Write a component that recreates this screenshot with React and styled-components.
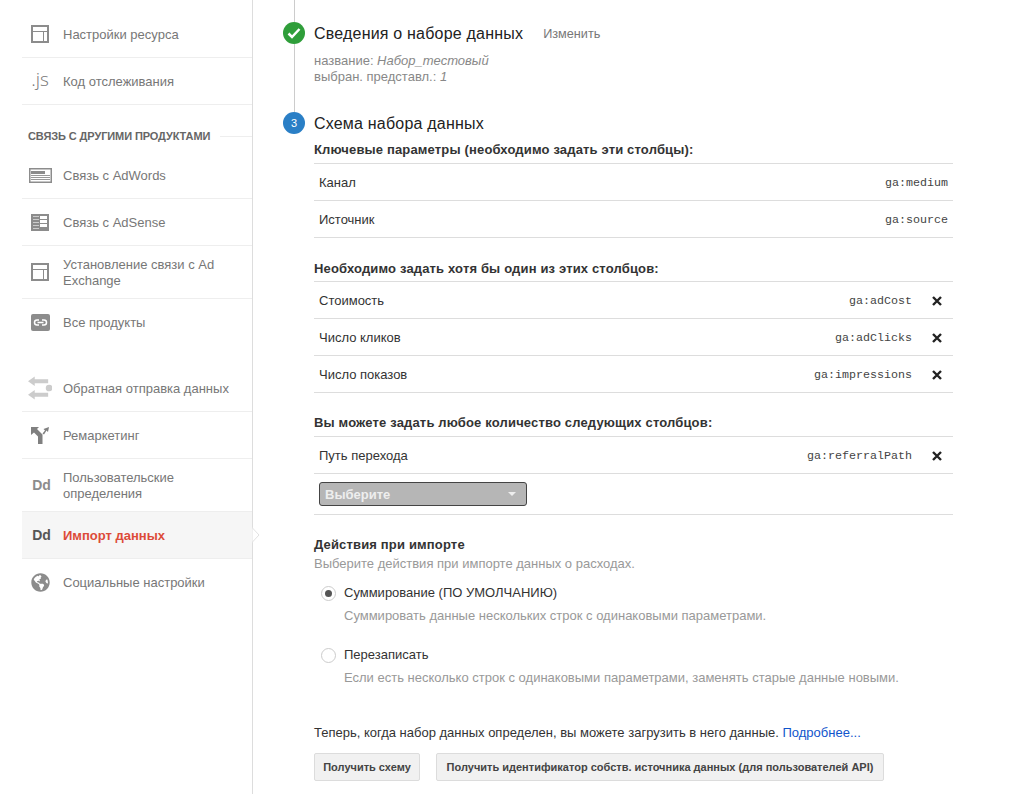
import React from 'react';
import styled, { createGlobalStyle } from 'styled-components';
import { FaGlobeAmericas } from 'react-icons/fa';

const GlobalStyle = createGlobalStyle`
    html, body {
        margin: 0;
        padding: 0;
        background: #fff;
    }
    body {
        font-family: "Liberation Sans", Arial, sans-serif;
        font-size: 13px;
        line-height: 16px;
        color: #333;
    }
`;

const Page = styled.div`
    display: flex;
    height: 794px;
    overflow: hidden;
`;

const Sidebar = styled.nav`
    box-sizing: border-box;
    width: 253px;
    flex: none;
    padding: 11px 0 0 22px;
    border-right: 1px solid #ddd;
`;

const Group = styled.div`
    margin-bottom: ${p => p.$gap || 0}px;
`;

const Item = styled.div`
    position: relative;
    box-sizing: border-box;
    display: flex;
    align-items: center;
    min-height: 47px;
    padding: 11px 20px 9px 6px;
    border-bottom: 1px solid ${p => (p.$last ? 'transparent' : '#eee')};
    background: ${p => (p.$active ? '#f6f6f6' : 'transparent')};
`;

const IconSlot = styled.div`
    width: 24px;
    flex: none;
    display: flex;
    align-items: center;
    justify-content: center;
    margin: -2px 11px 0 0;
    color: #8c8c8c;
`;

const ItemText = styled.span`
    color: ${p => (p.$active ? '#dd4b39' : '#777')};
    font-weight: ${p => (p.$active ? 'bold' : 'normal')};
`;

const JsGlyph = styled.span`
    font-family: "Open Sans", sans-serif;
    font-weight: 300;
    font-size: 19px;
    line-height: 20px;
    color: #777;
    position: relative;
    top: -2px;
`;

const DdGlyph = styled.span`
    padding-left: 3px;
    font-weight: bold;
    font-size: 14px;
    color: ${p => (p.$active ? '#555' : '#8c8c8c')};
`;

const ActiveNotch = styled.svg`
    position: absolute;
    left: 100%;
    top: 15px;
    width: 8px;
    height: 16px;
`;

const SectionHead = styled.div`
    display: flex;
    align-items: center;
    margin: 23px 0 8px 6px;
    font-size: 11px;
    letter-spacing: -0.1px;
    font-weight: bold;
    color: #666;
    white-space: nowrap;

    &::after {
        content: '';
        flex: 1;
        height: 1px;
        margin-left: 10px;
        background: #eee;
    }
`;

const Main = styled.main`
    flex: 1;
    min-width: 0;
    padding: 0 61px 0 30px;
`;

const Step = styled.section`
    display: flex;
`;

const Marker = styled.div`
    width: 22px;
    flex: none;
    margin-right: 9px;
    display: flex;
    flex-direction: column;
    align-items: center;
`;

const Rail = styled.div`
    width: 1px;
    flex: ${p => (p.$grow ? '1' : 'none')};
    height: ${p => (p.$grow ? 'auto' : '22px')};
    background: #ccc;
`;

const Bullet = styled.div`
    width: 22px;
    height: 22px;
    flex: none;
    border-radius: 50%;
    display: flex;
    align-items: center;
    justify-content: center;
    background: ${p => p.$color};
    color: #fff;
    font-size: 11px;
`;

const StepBody = styled.div`
    flex: 1;
    min-width: 0;
    padding-top: ${p => p.$top || 0}px;
    padding-bottom: ${p => p.$bottom || 0}px;
`;

const StepTitle = styled.h2`
    box-sizing: border-box;
    display: flex;
    align-items: center;
    height: 22px;
    margin: 0;
    padding-top: 2px;
    font-size: 16px;
    letter-spacing: 0.2px;
    font-weight: normal;
    line-height: 20px;
    color: #222;
`;

const EditLink = styled.span`
    margin-left: 20px;
    font-size: 12.7px;
    letter-spacing: 0;
    color: #777;
`;

const Summary = styled.div`
    margin-top: 9px;
    color: #888;
`;

const ColumnsHead = styled.h3`
    margin: ${p => p.$top}px 0 ${p => p.$bottom}px;
    font-size: 13px;
    letter-spacing: 0.16px;
    line-height: 16px;
    font-weight: bold;
    color: #333;
`;

const Table = styled.div`
    border-top: 1px solid #ddd;
`;

const Row = styled.div`
    box-sizing: border-box;
    display: flex;
    align-items: center;
    height: 37px;
    padding: 2px 0 0 5px;
    border-bottom: 1px solid #ddd;
    color: #333;
`;

const RowLabel = styled.span`
    flex: 1;
`;

const ColumnId = styled.code`
    font-family: "Liberation Mono", "Courier New", monospace;
    font-size: 11.67px;
    color: #444;
    margin-right: ${p => (p.$removable ? '0' : '5px')};
`;

const Remove = styled.svg`
    width: 10px;
    height: 10px;
    flex: none;
    margin: -1px 11px 0 20px;
`;

const SelectRow = styled.div`
    padding: 8px 0;
    border-bottom: 1px solid #ddd;
`;

const Select = styled.div`
    box-sizing: border-box;
    width: 208px;
    height: 24px;
    margin-left: 5px;
    padding: 2px 10px 0 5px;
    display: flex;
    align-items: center;
    justify-content: space-between;
    background: #b6b6b6;
    border: 1px solid #444;
    border-radius: 3px;
    color: #eee;
    font-weight: bold;

    &::after {
        content: '';
        margin-top: -2px;
        border-style: solid;
        border-width: 4px 4.5px 0;
        border-color: #eee transparent transparent;
    }
`;

const Hint = styled.div`
    margin: ${p => p.$top || 0}px 0 0 ${p => p.$left || 0}px;
    color: #999;
`;

const RadioRow = styled.label`
    display: flex;
    align-items: center;
    margin: ${p => p.$top}px 0 0 7px;
    color: #333;
`;

const RadioDot = styled.span`
    box-sizing: border-box;
    width: 15px;
    height: 15px;
    margin-right: 8px;
    border: 1px solid #ccc;
    border-radius: 50%;
    background: #fff;
    display: flex;
    align-items: center;
    justify-content: center;

    &::after {
        content: '';
        display: ${p => (p.$checked ? 'block' : 'none')};
        width: 7px;
        height: 7px;
        border-radius: 50%;
        background: #555;
    }
`;

const Footer = styled.p`
    margin: 39px 0 12px;
    color: #333;

    a {
        color: #15c;
        text-decoration: none;
    }
`;

const Buttons = styled.div`
    display: flex;
    gap: 16px;
`;

const Button = styled.button`
    width: ${p => p.$width}px;
    height: 28px;
    padding: 0;
    font-family: inherit;
    font-size: 11px;
    font-weight: bold;
    color: #444;
    background: #f1f1f1;
    border: 1px solid #dcdcdc;
    border-radius: 2px;
`;

const PanelIcon = () => (
    <svg width="18" height="18" viewBox="0 0 18 18" fill="none" stroke="#8c8c8c" strokeWidth="2">
        <rect x="1" y="1" width="16" height="16" />
        <path d="M1 6.5h16M12.5 6.5V17" strokeWidth="1" />
    </svg>
);

const AdWordsIcon = () => (
    <svg width="23" height="15" viewBox="0 0 23 15" fill="none">
        <rect x="0.75" y="0.75" width="21.5" height="13.5" stroke="#8c8c8c" strokeWidth="1.5" />
        <path d="M2 4.5h14" stroke="#8c8c8c" strokeWidth="3" />
        <path d="M2 7.5h19M2 9.5h19M2 11.5h19" stroke="#999" />
    </svg>
);

const AdSenseIcon = () => (
    <svg width="18" height="17" viewBox="0 0 18 17">
        <rect width="18" height="17" fill="#8c8c8c" />
        <path d="M2 2h6v1H2zM2 5h6v1H2zM2 8h6v1H2zM2 11h6v1H2zM2 14h6v1H2z" fill="#ccc" />
        <path d="M9 2h7v3H9zM9 6h7v3H9zM9 10h7v3H9z" fill="#fff" />
    </svg>
);

const LinkIcon = () => (
    <svg width="19" height="17" viewBox="0 0 19 17">
        <rect width="19" height="17" rx="2" fill="#8c8c8c" />
        <path d="M8 6H6a2.5 2.5 0 0 0 0 5h2M11 6h2a2.5 2.5 0 0 1 0 5h-2M6.5 8.500h6" fill="none" stroke="#fff" strokeWidth="1.500" />
    </svg>
);

const PostbackIcon = () => (
    <svg width="25" height="24" viewBox="0 0 25 24" fill="#ccc">
        <path d="M0 5l7-5v3h14v4H7v3z" />
        <path d="M0 19l7-5v3h14v4H7v3z" />
        <circle cx="22" cy="12" r="3.500" />
    </svg>
);

const RemarketingIcon = () => (
    <svg width="18" height="17" viewBox="0 0 18 17" fill="#808080">
        <path d="M0 0h8L6 2l5.500 5.500V17H7V9.500L3 5.500 0 8z" />
        <path d="M11.500 6.500l2.500-3-1.500-1.500L18 0l-1 5-1.500-1.500-2.500 4z" />
    </svg>
);

const CheckIcon = () => (
    <svg width="14" height="12" viewBox="0 0 14 12" fill="none" stroke="#fff" strokeWidth="2.500">
        <path d="M1.500 6.500L5 10l7.500-8" />
    </svg>
);

const RemoveIcon = () => (
    <Remove viewBox="0 0 10 10" fill="none" stroke="#222" strokeWidth="2.400">
        <path d="M1 1l8 8M9 1L1 9" />
    </Remove>
);

const ColumnRow = ({ label, id, removable }) => (
    <Row>
        <RowLabel>{label}</RowLabel>
        <ColumnId $removable={removable}>{id}</ColumnId>
        {removable && <RemoveIcon />}
    </Row>
);

export default function App() {
    return (
        <Page>
            <GlobalStyle />
            <Sidebar>
                <Group>
                    <Item><IconSlot><PanelIcon /></IconSlot><ItemText>Настройки ресурса</ItemText></Item>
                    <Item><IconSlot><JsGlyph>.js</JsGlyph></IconSlot><ItemText>Код отслеживания</ItemText></Item>
                </Group>
                <SectionHead>СВЯЗЬ С ДРУГИМИ ПРОДУКТАМИ</SectionHead>
                <Group $gap={19}>
                    <Item><IconSlot><AdWordsIcon /></IconSlot><ItemText>Связь с AdWords</ItemText></Item>
                    <Item><IconSlot><AdSenseIcon /></IconSlot><ItemText>Связь с AdSense</ItemText></Item>
                    <Item><IconSlot><PanelIcon /></IconSlot><ItemText>Установление связи с Ad Exchange</ItemText></Item>
                    <Item $last><IconSlot><LinkIcon /></IconSlot><ItemText>Все продукты</ItemText></Item>
                </Group>
                <Group>
                    <Item><IconSlot><PostbackIcon /></IconSlot><ItemText>Обратная отправка данных</ItemText></Item>
                    <Item><IconSlot><RemarketingIcon /></IconSlot><ItemText>Ремаркетинг</ItemText></Item>
                    <Item><IconSlot><DdGlyph>Dd</DdGlyph></IconSlot><ItemText>Пользовательские определения</ItemText></Item>
                    <Item $active>
                        <IconSlot><DdGlyph $active>Dd</DdGlyph></IconSlot>
                        <ItemText $active>Импорт данных</ItemText>
                        <ActiveNotch viewBox="0 0 8 16">
                            <path d="M0 0.500L7 8 0 15.500z" fill="#fff" stroke="#e2e2e2" />
                        </ActiveNotch>
                    </Item>
                    <Item $last><IconSlot><FaGlobeAmericas size={19} /></IconSlot><ItemText>Социальные настройки</ItemText></Item>
                </Group>
            </Sidebar>
            <Main>
                <Step>
                    <Marker>
                        <Rail />
                        <Bullet $color="#2f9e3a"><CheckIcon /></Bullet>
                        <Rail $grow />
                    </Marker>
                    <StepBody $top={22} $bottom={27}>
                        <StepTitle>Сведения о наборе данных<EditLink>Изменить</EditLink></StepTitle>
                        <Summary>
                            название: <em>Набор_тестовый</em><br />
                            выбран. представл.: <em>1</em>
                        </Summary>
                    </StepBody>
                </Step>
                <Step>
                    <Marker>
                        <Bullet $color="#2a7fc6">3</Bullet>
                    </Marker>
                    <StepBody>
                        <StepTitle>Схема набора данных</StepTitle>
                        <ColumnsHead $top={8} $bottom={5}>Ключевые параметры (необходимо задать эти столбцы):</ColumnsHead>
                        <Table>
                            <ColumnRow label="Канал" id="ga:medium" />
                            <ColumnRow label="Источник" id="ga:source" />
                        </Table>
                        <ColumnsHead $top={23} $bottom={4}>Необходимо задать хотя бы один из этих столбцов:</ColumnsHead>
                        <Table>
                            <ColumnRow label="Стоимость" id="ga:adCost" removable />
                            <ColumnRow label="Число кликов" id="ga:adClicks" removable />
                            <ColumnRow label="Число показов" id="ga:impressions" removable />
                        </Table>
                        <ColumnsHead $top={22} $bottom={5}>Вы можете задать любое количество следующих столбцов:</ColumnsHead>
                        <Table>
                            <ColumnRow label="Путь перехода" id="ga:referralPath" removable />
                            <SelectRow><Select>Выберите</Select></SelectRow>
                        </Table>
                        <ColumnsHead $top={22} $bottom={0}>Действия при импорте</ColumnsHead>
                        <Hint $top={3}>Выберите действия при импорте данных о расходах.</Hint>
                        <RadioRow $top={13}><RadioDot $checked />Суммирование (ПО УМОЛЧАНИЮ)</RadioRow>
                        <Hint $top={7} $left={30}>Суммировать данные нескольких строк с одинаковыми параметрами.</Hint>
                        <RadioRow $top={23}><RadioDot />Перезаписать</RadioRow>
                        <Hint $top={7} $left={30}>Если есть несколько строк с одинаковыми параметрами, заменять старые данные новыми.</Hint>
                        <Footer>Теперь, когда набор данных определен, вы можете загрузить в него данные. <a href="#more">Подробнее...</a></Footer>
                        <Buttons>
                            <Button $width={106}>Получить схему</Button>
                            <Button $width={448}>Получить идентификатор собств. источника данных (для пользователей API)</Button>
                        </Buttons>
                    </StepBody>
                </Step>
            </Main>
        </Page>
    );
}
